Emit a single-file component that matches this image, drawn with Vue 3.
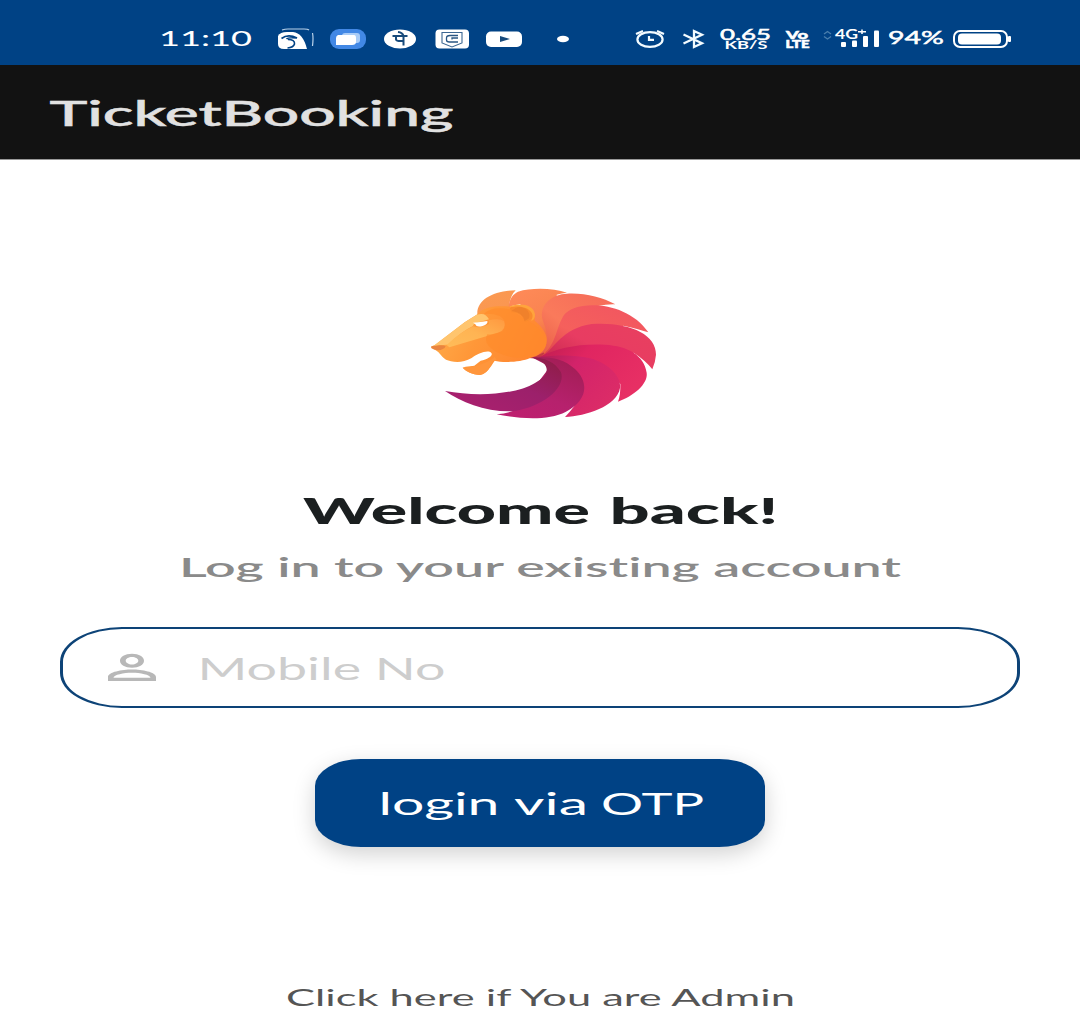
<script setup>
const wide = 'spacingAndGlyphs'
</script>

<template>
  <main class="screen">
    <header class="status">
      <svg class="time" width="90" height="65" viewBox="161 0 90 65">
        <text x="159" y="46" font-size="21" textLength="93" :lengthAdjust="wide">11:10</text>
      </svg>
      <svg class="notes" width="300" height="65" viewBox="274 0 300 65">
        <path d="M282 30Q285 29 288 29H304Q308 29 309 30M312.500 33Q313.500 38 312.500 46" fill="none" stroke="#b9d2ea" stroke-width="1.200" />
        <path d="M278 36Q280 32 287 32H293Q303 33 307 49H284Q278 49 278 44Z" />
        <path d="M281.500 38.500Q288 33.500 297 38Q288 37 286.500 39M288 39.500Q295 39.500 294.500 44Q293.500 47.500 287.500 48" fill="none" stroke="#004285" stroke-width="1.600" />
        <rect x="330" y="29" width="36" height="20" rx="9" fill="#4288e5" />
        <rect x="342" y="33" width="18" height="10" rx="3" fill="#a9ccf7" />
        <path d="M338 35H354Q356 35 356 38V42Q356 45 352 45H336V38Q336 36 338 35Z" />
        <ellipse cx="400" cy="39" rx="16" ry="9.500" />
        <path d="M392.500 36H407.500M403.500 36V45.500M396 36V39.500Q396.500 41.500 403 41M398 32Q402.500 32.500 403.500 36" fill="none" stroke="#174a7b" stroke-width="2" />
        <rect x="435.500" y="29.500" width="33.500" height="19" rx="4" />
        <path d="M442 32.500H462V43L452 47L442 43Z" fill="none" stroke="#3b6692" stroke-width="1.100" />
        <path d="M458 35.500H450Q446.500 35.500 446.500 38V40Q446.500 42 449.500 42H458M458 38H452V39.500" fill="none" stroke="#285582" stroke-width="1.300" />
        <rect x="486" y="31.500" width="36" height="15.500" rx="5" />
        <path d="M500 36L510 39L500 42Z" fill="#174a7b" />
        <ellipse cx="563" cy="39" rx="6" ry="3.300" />
      </svg>
      <svg class="radios" width="180" height="65" viewBox="632 0 180 65">
        <g fill="none" stroke="#f3fbff">
          <ellipse cx="650" cy="39.500" rx="12.600" ry="7.400" stroke-width="2.200" />
          <path d="M636 34L643 31M657 31L664 34M649 36V39.800H654" stroke-width="2.200" />
          <path d="M683.500 34.500L702 43.200L694 47V31L702 34.800L683.500 43.500" stroke-width="2.300" />
        </g>
        <g font-weight="700">
          <text x="720" y="39.500" font-size="15" textLength="51" :lengthAdjust="wide" font-weight="400" class="bolder">0.65</text>
          <text x="724.500" y="48.800" font-size="10.500" textLength="43" :lengthAdjust="wide">KB/S</text>
          <text x="786" y="39" font-size="11.500" font-weight="900" textLength="22" :lengthAdjust="wide" class="bolder">Vo</text>
          <text x="785.500" y="47.500" font-size="10.500" font-weight="900" textLength="24" :lengthAdjust="wide" class="bolder">LTE</text>
        </g>
      </svg>
      <svg class="power" width="190" height="65" viewBox="822 0 190 65">
        <path d="M824 34L827.500 31.500L831 34M824 36.500L827.500 39L831 36.500" fill="none" stroke="#497ead" stroke-width="1.400" />
        <text x="835" y="38.800" font-size="12.500" font-weight="700" textLength="23" :lengthAdjust="wide">4G</text>
        <path d="M858 31.800H866M862 29.500V34" fill="none" stroke="#fff" stroke-width="1.500" />
        <rect x="841" y="42" width="5" height="5" rx="1" />
        <rect x="852" y="40.500" width="5" height="6.500" rx="1" />
        <rect x="863" y="36" width="5" height="11" rx="1" />
        <rect x="874" y="30.500" width="5" height="16.500" rx="1" />
        <text x="888" y="44.300" font-size="17.500" textLength="56" :lengthAdjust="wide" class="bolder">94%</text>
        <rect x="954" y="31" width="53" height="16" rx="6" fill="none" stroke="#fff" stroke-width="2" />
        <rect x="958" y="33.500" width="43" height="11" rx="4" />
        <rect x="1008" y="36" width="3" height="6" rx="1" />
      </svg>
    </header>

    <div class="appbar">
      <svg width="420" height="94" viewBox="50 65 420 94">
        <text x="49.500" y="125.600" font-size="34.500" font-weight="500" textLength="404" :lengthAdjust="wide" class="bolder">TicketBooking</text>
      </svg>
    </div>

    <section class="content">
      <svg class="logo" width="250" height="150" viewBox="0 0 750 450" preserveAspectRatio="none">
        <defs>
          <linearGradient id="m1" x1="0" y1="0" x2="1" y2="1"><stop stop-color="#fb9a50" /><stop offset=".5" stop-color="#fa9752" /><stop offset="1" stop-color="#f58a36" /></linearGradient>
          <linearGradient id="m2" x1="0" y1="0" x2=".5" y2="1"><stop stop-color="#ff8b59" /><stop offset=".6" stop-color="#f98350" /><stop offset="1" stop-color="#ed633d" /></linearGradient>
          <linearGradient id="m3" x1="1" y1="0" x2="0" y2="1"><stop stop-color="#f56a59" /><stop offset=".55" stop-color="#fa7a5b" /><stop offset="1" stop-color="#e45743" /></linearGradient>
          <linearGradient id="m4" x1="1" y1="0" x2="0" y2="1"><stop stop-color="#f15461" /><stop offset=".6" stop-color="#f5605c" /><stop offset="1" stop-color="#db4048" /></linearGradient>
          <linearGradient id="m5" x1="1" y1="0" x2="0" y2=".7"><stop stop-color="#e8405f" /><stop offset=".6" stop-color="#e83c62" /><stop offset="1" stop-color="#ca2950" /></linearGradient>
          <linearGradient id="m6" x1="1" y1=".5" x2="0" y2="0"><stop stop-color="#e72f64" /><stop offset=".6" stop-color="#e02561" /><stop offset="1" stop-color="#bd1d50" /></linearGradient>
          <linearGradient id="m7" x1="1" y1=".6" x2="0" y2="0"><stop stop-color="#dc2c67" /><stop offset=".6" stop-color="#d3236a" /><stop offset="1" stop-color="#ab1e53" /></linearGradient>
          <linearGradient id="m8" x1="0" y1="1" x2=".6" y2="0"><stop stop-color="#c01f70" /><stop offset=".5" stop-color="#b6216d" /><stop offset="1" stop-color="#a51e58" /></linearGradient>
          <linearGradient id="m9" x1="0" y1="1" x2="1" y2="0"><stop stop-color="#ad206f" /><stop offset=".55" stop-color="#9c206b" /><stop offset="1" stop-color="#8e1c43" /></linearGradient>
          <linearGradient id="face" x1="0" y1="0" x2="1" y2=".3"><stop stop-color="#ffb04e" /><stop offset=".5" stop-color="#ff9738" /><stop offset="1" stop-color="#ff8630" /></linearGradient>
          <linearGradient id="nose" x1="0" y1="1" x2="1" y2="0"><stop stop-color="#ffbc59" /><stop offset=".5" stop-color="#ffb453" /><stop offset="1" stop-color="#ff9940" /></linearGradient>
        </defs>
        <path fill="#c43a42" d="M325 234L350 190L440 200L400 250Q365 236 325 234Z" />
        <path fill="url(#m1)" d="M172 103C170 60 220 32 287 31Q273 44 268 72L330 125L210 115Z" />
        <path fill="url(#m2)" d="M266 80C268 55 280 42 294 35C335 22 400 24 441 38Q425 39 410 44L420 150L374 225L335 120L300 72Z" />
        <path fill="url(#m3)" d="M340 232C400 200 380 155 368 120C355 72 400 42 440 41C494 38 545 51 586 73Q560 72 535 78L500 110L450 180Z" />
        <path fill="url(#m4)" d="M360 232C410 195 405 150 430 108C462 58 620 60 685 157Q660 148 610 137L590 180L480 210Z" />
        <path fill="url(#m5)" d="M365 230C405 205 425 145 515 132C620 124 710 160 708 224Q706 248 697 268Q680 244 641 218L600 250L490 225Z" />
        <path fill="url(#m6)" d="M360 230C410 205 475 190 555 194C625 198 672 226 680 278C685 312 640 348 594 365Q602 344 601 312L560 270L500 250Z" />
        <path fill="url(#m7)" d="M350 231C415 225 460 223 510 235C570 251 605 293 600 324C590 380 498 408 435 411Q448 398 463 378L440 260Z" />
        <path fill="url(#m8)" d="M335 232C398 230 430 236 465 267C510 310 500 363 438 395C382 424 297 416 230 403Q270 400 295 385L390 260Z" />
        <path fill="url(#m9)" d="M330 232C375 232 405 246 423 277C440 329 354 387 275 394C196 396 125 367 75 333C167 350 285 345 345 309C370 294 381 283 380 267C379 249 353 235 330 232Z" />

        <path fill="url(#face)" d="M170 104C196 77 234 78 270 80C315 75 349 83 344 122C366 141 386 164 379 191C375 213 357 227 330 234C303 247 246 249 224 242C210 263 202 279 180 285C156 282 140 277 128 263L137 260L163 257L182 242C205 237 220 226 214 219C205 208 173 220 155 234C125 252 94 246 78 239C57 226 64 216 34 204L35 199L45 195L134 127Z" />
        <path fill="#ffc56e" d="M170 104C190 98 200 104 207 118L182 125Q160 127 159 138Q123 155 84 194Q65 193 36 201L134 127Z" />
        <path fill="url(#nose)" d="M160 139Q183 147 207 132L206 121Q237 113 252 123Q261 148 234 158L88 202L80 195Q120 157 160 139Z" />
        <path fill="#ff8b2a" opacity=".6" d="M202 163Q219 165 249 153Q265 123 239 108Q215 99 191 102Q215 78 270 88L320 120Q377 151 379 191Q374 213 331 231Q279 240 229 216Q187 192 202 163Z" />
        <path fill="#f98a2d" d="M269 84C290 70 334 75 341 102Q342 119 314 125Q309 100 275 96Z" />
        <path fill="#f0812b" d="M287 84C310 74 335 94 327 115L314 123Q311 98 275 92Z" />
        <path fill="#ffa43c" d="M270 79C299 68 342 73 345 104Q345 121 333 122C351 97 316 72 270 82Z" />
        <path fill="#ff963c" d="M128 263C164 263 206 247 224 231L230 239Q218 242 210 260Q200 281 180 285Q144 281 128 263Z" />
        <path fill="#fff" d="M159 128Q182 126 202 123Q205 132 188 138Q169 143 166 133Z" />
        <path fill="#e98540" d="M34 199L58 196Q72 195 77 199Q72 210 54 211Q40 209 34 204Z" />
      </svg>

      <svg class="heading" width="480" height="44" viewBox="300 490 480 44">
        <text y="524" font-size="35.500" font-weight="900" fill="#1b1f20"><tspan x="303" textLength="287" :lengthAdjust="wide">Welcome</tspan>{{ ' ' }}<tspan x="609.500" textLength="169" :lengthAdjust="wide">back!</tspan></text>
      </svg>
      <svg class="subtitle" width="730" height="40" viewBox="175 550 730 40">
        <text x="179" y="577.300" font-size="27" font-weight="600" fill="#8a8a8a" textLength="722" :lengthAdjust="wide">Log in to your existing account</text>
      </svg>

      <label class="field">
        <svg width="400" height="77" viewBox="63 628.5 400 77">
          <path fill="#b8b8b8" fill-rule="evenodd" d="M132 653.300C125 653.300 120 656.300 120 660.300S125 667.300 132 667.300S144 664.300 144 660.300S139 653.300 132 653.300ZM132 656.600C135.500 656.600 138.300 658.300 138.300 660.300S135.500 664 132 664S125.700 662.300 125.700 660.300S128.500 656.600 132 656.600ZM108 680.600V676.500C108 671.500 122 669 132 669S156 671.500 156 676.500V680.600ZM113.500 677.300H150.500C150.500 674.300 140 672.300 132 672.300S113.500 674.300 113.500 677.300Z" />
          <text x="197.500" y="679.800" font-size="31" fill="#cdcdcd" textLength="248" :lengthAdjust="wide">Mobile No</text>
        </svg>
      </label>

      <button class="login">
        <svg width="450" height="88" viewBox="315 759 450 88">
          <text y="814.500" font-size="30.500" fill="#fff"><tspan x="378.500" textLength="121" :lengthAdjust="wide">login</tspan>{{ ' ' }}<tspan x="514" textLength="74" :lengthAdjust="wide">via</tspan>{{ ' ' }}<tspan x="601" textLength="103" :lengthAdjust="wide">OTP</tspan></text>
        </svg>
      </button>

      <a class="admin">
        <svg width="520" height="34" viewBox="280 975 520 34">
          <text x="286" y="1006" font-size="23.500" fill="#555" textLength="509" :lengthAdjust="wide">Click here if You are Admin</text>
        </svg>
      </a>
    </section>
  </main>
</template>

<style>
body { margin: 0; background: #fff; }
</style>

<style scoped>
.screen {
  width: 1080px;
  height: 1009px;
  overflow: hidden;
  background: #fff;
  font-family: Lato, "Liberation Sans", sans-serif;
  font-variant-ligatures: none;
}
svg { display: block; flex: none; overflow: visible; }
.status {
  display: flex;
  height: 65px;
  padding-left: 161px;
  background: #004285;
  color: #fff;
  fill: #fff;
}
.notes { margin-left: 23px; }
.radios { margin-left: 58px; }
.power { margin-left: 10px; }
.bolder { stroke: currentColor; stroke-width: .5px; }
.appbar {
  box-sizing: border-box;
  height: 95px;
  padding-left: 50px;
  border-bottom: 1px solid #999;
  background: #121212;
  color: #e1e1e1;
  fill: #e1e1e1;
}
.content {
  display: flex;
  flex-direction: column;
  align-items: center;
}
.logo { margin: 120px 0 0 10px; }
.heading { margin-top: 60px; }
.subtitle { margin-top: 16px; }
.field {
  box-sizing: border-box;
  width: 960px;
  height: 81px;
  margin-top: 36.500px;
  border: solid #0d4377;
  border-width: 2px 3px;
  border-radius: 62px / 35px;
}
.login {
  width: 450px;
  height: 88px;
  margin-top: 51.500px;
  padding: 0;
  border: 0;
  border-radius: 46px / 27px;
  background: #004285;
  box-shadow: 0 7px 22px rgba(0, 0, 0, .18);
  font-family: inherit;
}
.admin { margin-top: 128px; }
</style>
